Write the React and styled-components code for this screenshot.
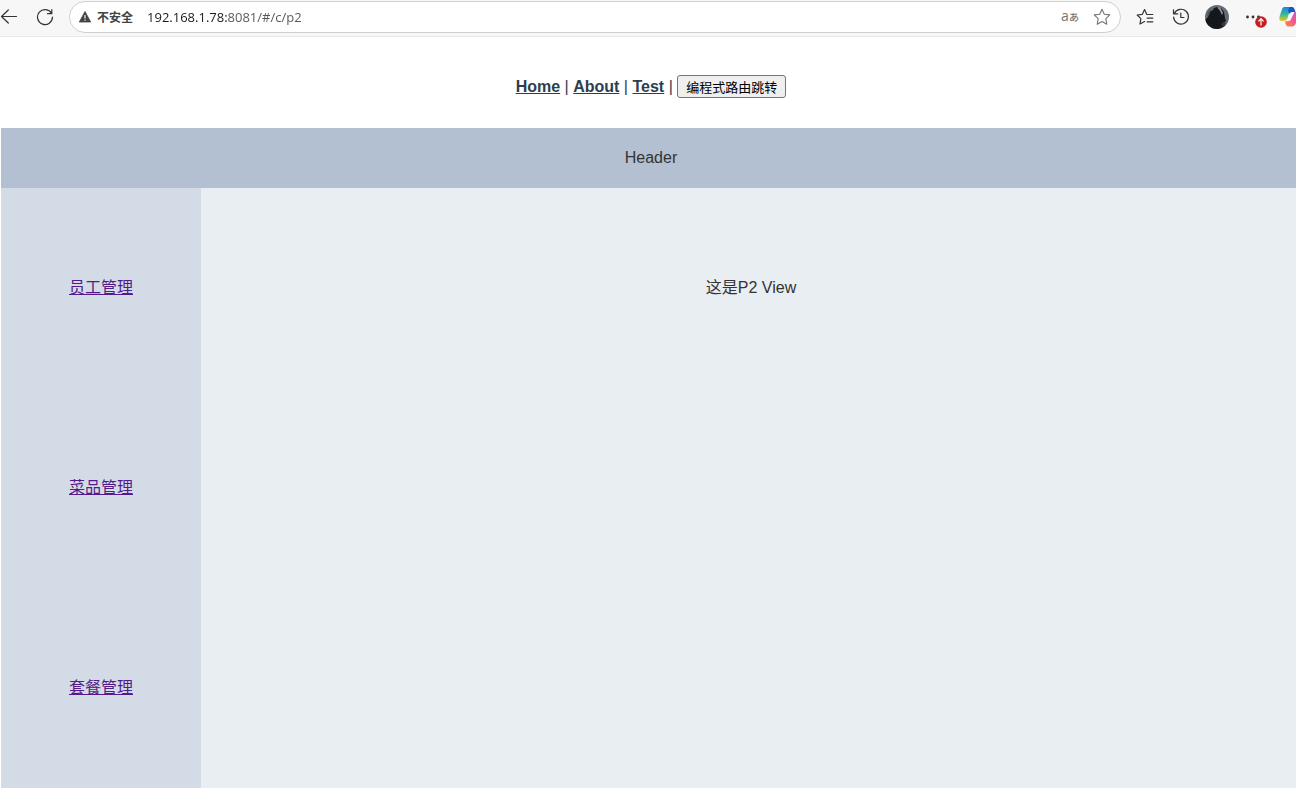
import React, { useState } from "react";
import styled, { createGlobalStyle } from "styled-components";

const GlobalStyle = createGlobalStyle`
    * {
        box-sizing: border-box;
    }
    body {
        margin: 0;
        background: #ffffff;
        overflow-x: hidden;
        font-family: "Liberation Sans", "Noto Sans CJK SC", sans-serif;
        font-size: 16px;
        color: #2c3e50;
    }
`

const Toolbar = styled.div`
    display: flex;
    align-items: center;
    height: 37px;
    margin: 0 -11px 0 -9px;
    padding-bottom: 2px;
    background: #f7f7f7;
    border-bottom: 1px solid #e9e9e9;
`

const ToolButton = styled.button`
    position: relative;
    display: flex;
    align-items: center;
    justify-content: center;
    flex: none;
    width: 36px;
    height: 32px;
    padding: 0;
    border: 0;
    background: transparent;
    color: ${props => props.$color || "#333333"};

    svg {
        display: block;
    }
`

const TranslateButton = styled(ToolButton)`
    width: 28px;
    align-items: baseline;
    font-family: "Open Sans", "Noto Sans CJK JP", sans-serif;
    font-size: 14px;
    line-height: 30px;

    small {
        font-size: 10px;
        font-weight: 500;
    }
`

const AddressBar = styled.div`
    display: flex;
    align-items: center;
    flex: 1;
    min-width: 0;
    height: 32px;
    margin: 0 6px;
    padding: 0 0 0 9px;
    background: #ffffff;
    border: 1px solid #cfcfcf;
    border-radius: 16px;
`

const Security = styled.label`
    display: flex;
    align-items: center;
    gap: 6px;
    color: #444444;
    font-family: "Noto Sans CJK SC", sans-serif;
    font-size: 12px;
    font-weight: bold;
    line-height: 16px;
`

const UrlInput = styled.input`
    flex: 1;
    min-width: 0;
    height: 24px;
    margin-left: 14px;
    padding: 0;
    border: 0;
    outline: 0;
    font-family: "Open Sans", sans-serif;
    font-size: 13px;
    color: transparent;
    caret-color: #222222;
    background: linear-gradient(90deg, #1a1a1a 80px, #555555 80px);
    background-clip: text;
    -webkit-background-clip: text;
`

const Badge = styled.span`
    position: absolute;
    right: 4px;
    bottom: 5px;
    width: 12px;
    height: 12px;
`

const Nav = styled.nav`
    padding: 38px 0 30px;
    line-height: 23px;
`

const NavLink = styled.a`
    font-weight: bold;
    color: #2c3e50;
`

const JumpButton = styled.button`
    height: 23px;
    padding: 0 8px;
    border: 1px solid #767676;
    border-radius: 3px;
    background: #efefef;
    color: #000000;
    font-family: "Noto Sans CJK SC", sans-serif;
    font-size: 13px;
    line-height: 20px;
    vertical-align: top;
`

const Page = styled.div`
    margin: 0 -5px 0 1px;
    text-align: center;
`

const Header = styled.header`
    background: #b3c0d1;
    color: #333333;
    line-height: 60px;
`

const Container = styled.div`
    display: flex;
`

const Aside = styled.aside`
    flex: none;
    width: 200px;
    background: #d3dce6;
    line-height: 200px;
`

const AsideLink = styled.a`
    color: #551a8b;
`

const AsideItem = styled.div`
    height: 200px;
`

const Main = styled.main`
    flex: 1;
    background: #e9eef3;
    color: #333333;
    line-height: 200px;
`

const stroke = { fill: "none", stroke: "currentColor", strokeLinecap: "round", strokeLinejoin: "round" };

const BackIcon = () => (
    <svg width="18" height="18" viewBox="0 0 18 18" {...stroke} strokeWidth="1.2">
        <path d="M16.5 8.5H1.8M8.3 2 1.5 8.5 8.3 15" />
    </svg>
);

const ReloadIcon = () => (
    <svg width="18" height="18" viewBox="0 0 18 18" {...stroke} strokeWidth="1.2">
        <path d="M15.6 5.5A7.5 7.5 0 1 0 16.5 9M15.8 1.5V5.7H11.5" />
    </svg>
);

const WarningIcon = () => (
    <svg width="12" height="12" viewBox="0 0 12 12">
        <path d="M6 .5 11.7 11H.3Z" fill="#444444" stroke="#444444" strokeWidth=".8" strokeLinejoin="round" />
        <path d="M6 4v3.4M6 8.6v1.2" stroke="#ffffff" strokeWidth="1.1" />
    </svg>
);

const StarIcon = () => (
    <svg width="18" height="18" viewBox="0 0 18 18" {...stroke} strokeWidth="1.1">
        <path d="M9 1.2 11.3 6.2 16.8 6.9 12.8 10.7 13.8 16.3 9 13.6 4.2 16.3 5.2 10.7 1.2 6.9 6.7 6.2Z" />
    </svg>
);

const FavoritesIcon = () => (
    <svg width="18" height="18" viewBox="0 0 18 18" {...stroke} strokeWidth="1.2">
        <path d="M11.2 6.5H10.8L8.6 1.5 6.2 6.4 1.2 7 4.9 10.6 4 16 8.5 13.5M11.2 6.5H16.8M11.2 10.2H16.8M11.2 13.8H16.8" />
    </svg>
);

const HistoryIcon = () => (
    <svg width="18" height="18" viewBox="0 0 18 18" {...stroke} strokeWidth="1.2">
        <path d="M2.3 5.5A7.4 7.4 0 1 1 1.6 9M1.5 1.8V5.8H5.8M8.8 5V9.5H12" />
    </svg>
);

const AvatarIcon = () => (
    <svg width="24" height="24" viewBox="0 0 24 24">
        <defs>
            <clipPath id="avatar-clip"><circle cx="12" cy="12" r="12" /></clipPath>
        </defs>
        <g clipPath="url(#avatar-clip)">
            <rect width="24" height="24" fill="#666b76" />
            <path d="M0 15 3 12 4 7 8 5 9 3 12 2 13 4 16 3 19 7 20 13 21 16 18 18 20 21 14 24H7L2 20Z" fill="#15181b" />
            <path d="M13 3 15 2 16 4 18 8 17 10 15 6Z" fill="#8b929c" />
            <path d="M2 9 6 3 5 8 3 12Z" fill="#4c525c" />
            <path d="M16 19 19 17 21 18 18 22Z" fill="#33373e" />
        </g>
    </svg>
);

const MoreIcon = () => (
    <svg width="18" height="18" viewBox="0 0 18 18" fill="currentColor">
        <circle cx="3.5" cy="9" r="1.4" />
        <circle cx="9" cy="9" r="1.4" />
        <circle cx="14.5" cy="9" r="1.4" />
    </svg>
);

const UpdateIcon = () => (
    <svg width="12" height="12" viewBox="0 0 12 12">
        <circle cx="6" cy="6" r="5.8" fill="#c42023" />
        <path d="M6 9.4V3M3.4 5.4 6 2.7 8.6 5.4" fill="none" stroke="#ffffff" strokeWidth="1.2" />
    </svg>
);

const CopilotIcon = () => (
    <svg width="20" height="20" viewBox="0 0 20 20">
        <defs>
            <linearGradient id="copilot-left" x1="0" y1="0" x2="0" y2="1">
                <stop offset="0" stopColor="#1683e2" />
                <stop offset=".5" stopColor="#35b79a" />
                <stop offset="1" stopColor="#f2c512" />
            </linearGradient>
            <linearGradient id="copilot-right" x1="1" y1="0" x2="0" y2="1">
                <stop offset="0" stopColor="#b45bea" />
                <stop offset=".5" stopColor="#f0598f" />
                <stop offset="1" stopColor="#ff8a3c" />
            </linearGradient>
        </defs>
        <path d="M5.5 0H12L8.5 11C7.7 13.3 6.5 14 4 14H3C0 14 0 11 1 8L3 2.5C3.6 .7 4.5 0 5.5 0Z" fill="url(#copilot-left)" />
        <path d="M10.5 0H13C15 0 15.5 2 16.5 5H13C11.5 5 11 6 10.5 7L9 4Z" fill="#1756c8" />
        <path d="M15.5 5H17C20 5 20 8 19 11L17 16C16 18.5 15 19.5 12 19.5H9.5C7 19.5 6.5 17 6 14.2H8.5C10.5 14.2 11.5 13.8 12.3 11.5Z" fill="url(#copilot-right)" />
    </svg>
);

const links = [
    { to: "#/c/p1", text: "员工管理" },
    { to: "#/c/p2", text: "菜品管理" },
    { to: "#/c/p3", text: "套餐管理" },
];

const BrowserBar = () => {
    const [url, setUrl] = useState("192.168.1.78:8081/#/c/p2");
    return (
        <Toolbar>
            <ToolButton aria-label="Back"><BackIcon /></ToolButton>
            <ToolButton aria-label="Reload"><ReloadIcon /></ToolButton>
            <AddressBar>
                <Security htmlFor="url"><WarningIcon />不安全</Security>
                <UrlInput id="url" value={url} onChange={(e) => setUrl(e.target.value)} />
                <TranslateButton $color="#747474">a<small>あ</small></TranslateButton>
                <ToolButton aria-label="Add to favorites" $color="#747474"><StarIcon /></ToolButton>
            </AddressBar>
            <ToolButton aria-label="Favorites"><FavoritesIcon /></ToolButton>
            <ToolButton aria-label="History"><HistoryIcon /></ToolButton>
            <ToolButton aria-label="Profile"><AvatarIcon /></ToolButton>
            <ToolButton aria-label="Settings">
                <MoreIcon />
                <Badge><UpdateIcon /></Badge>
            </ToolButton>
            <ToolButton aria-label="Copilot"><CopilotIcon /></ToolButton>
        </Toolbar>
    )
};

const App = () => {
    return (
        <>
            <GlobalStyle />
            <BrowserBar />
            <Page>
                <Nav>
                    <NavLink href="#/">Home</NavLink> |{" "}
                    <NavLink href="#/about">About</NavLink> |{" "}
                    <NavLink href="#/test">Test</NavLink> |{" "}
                    <JumpButton>编程式路由跳转</JumpButton>
                </Nav>
                <Header>Header</Header>
                <Container>
                    <Aside>
                        {links.map((link) => (
                            <AsideItem key={link.to}>
                                <AsideLink href={link.to}>{link.text}</AsideLink>
                            </AsideItem>
                        ))}
                    </Aside>
                    <Main>这是P2 View</Main>
                </Container>
            </Page>
        </>
    )
};

export default App
